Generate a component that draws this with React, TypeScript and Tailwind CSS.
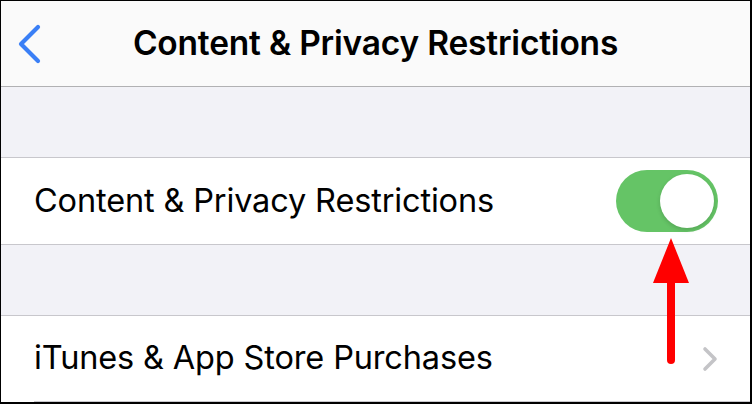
export default function App() {
  return (
    <div className="relative w-[752px] h-[404px] overflow-hidden border-t border-l border-r-2 border-b-2 border-black bg-white font-['Inter',sans-serif] text-black">
      {/* nav bar */}
      <div className="relative flex h-[86px] items-center justify-center border-b border-[#b1b1b3] bg-[#fafafa]">
        <svg className="absolute left-[12px] top-[23px]" width="32" height="40" viewBox="0 0 32 40">
          <path d="M25 3 L8 20 L25 37" fill="none" stroke="#3a7ff6" strokeWidth="4.2" strokeLinecap="round" strokeLinejoin="round" />
        </svg>
        <h1 className="text-[33.5px] font-semibold tracking-[-0.2px]">Content &amp; Privacy Restrictions</h1>
      </div>

      <div className="h-[71px] border-b border-[#c8c7cc] bg-[#f2f2f7]" />

      <div className="flex h-[87px] items-center justify-between border-b border-[#c8c7cc] pl-[33px] pr-[32px]">
        <span className="text-[32.5px] tracking-[-0.15px]">Content &amp; Privacy Restrictions</span>
        <div className="flex h-[62px] w-[102px] items-center justify-end rounded-full bg-[#65c466] pr-[4px]">
          <div className="h-[54px] w-[54px] rounded-full bg-white shadow-[0_2px_4px_rgba(0,0,0,0.15)]" />
        </div>
      </div>

      <div className="h-[71px] border-b border-[#c8c7cc] bg-[#f2f2f7]" />

      <div className="ml-[33px] flex h-[86px] items-center justify-between border-b border-[#c8c7cc] pr-[32px]">
        <span className="text-[32.5px] tracking-[-0.15px]">iTunes &amp; App Store Purchases</span>
        <svg width="16" height="26" viewBox="0 0 16 26">
          <path d="M3 3 L13 13 L3 23" fill="none" stroke="#c4c4c7" strokeWidth="3.6" strokeLinecap="round" strokeLinejoin="round" />
        </svg>
      </div>

      {/* red arrow */}
      <svg className="absolute left-[648px] top-[235px]" width="44" height="130" viewBox="0 0 44 130">
        <polygon points="22,2 40,47 4,47" fill="#ff0000" />
        <line x1="22" y1="44" x2="22" y2="124" stroke="#ff0000" strokeWidth="8" strokeLinecap="round" />
      </svg>
    </div>
  );
}
